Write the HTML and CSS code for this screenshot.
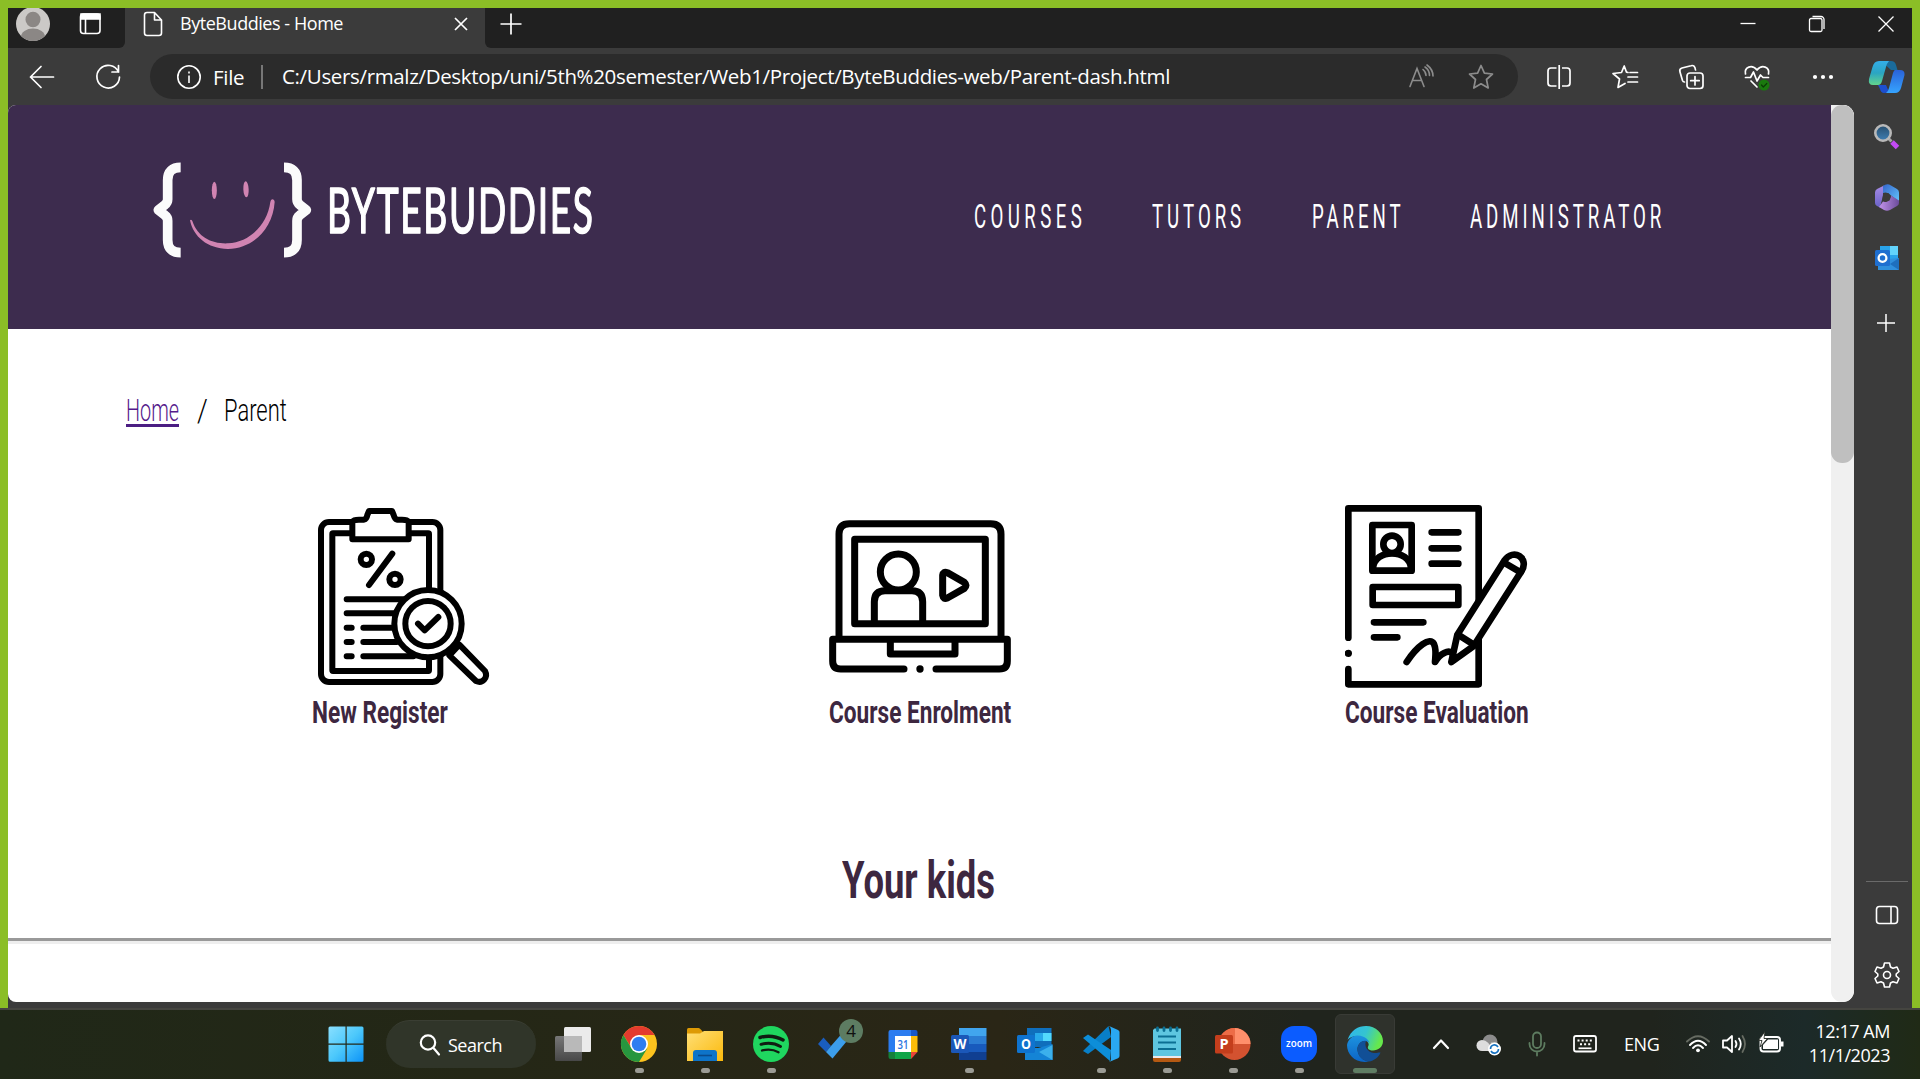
FILE: index.html
```html
<!DOCTYPE html>
<html lang="en">
<head>
<meta charset="utf-8">
<title>ByteBuddies - Home</title>
<link rel="stylesheet" href="styles.css">
</head>
<body>
<div class="desktop">
  <div class="window">
    <header class="titlebar">
      <div class="tab-tools">
        <svg class="ico" viewBox="-20 -20 40 40"><defs><clipPath id="face"><circle r="17"/></clipPath></defs><circle r="17" fill="#cbc9c7"/><g clip-path="url(#face)" fill="#8b8785"><ellipse cy="-4.500" rx="7.500" ry="7.800"/><ellipse cy="13" rx="12" ry="8.500"/></g></svg>
        <svg class="ico" viewBox="-20 -20 40 40" fill="none" stroke="#fff" stroke-width="1.600"><rect x="-9.500" y="-10" width="19.500" height="19.500" rx="3"/><path d="M-4.500-5V9.500"/><path d="M-9-10h19v5h-19z" fill="#fff"/></svg>
      </div>
      <div class="tab">
        <svg class="ico" viewBox="-20 -20 40 40" fill="none" stroke="#fff" stroke-width="1.600" stroke-linejoin="round"><path d="M-6-11.500H1.500L8.500-4V9a2.500 2.500 0 0 1-2.500 2.500H-6A2.500 2.500 0 0 1-8.500 9V-9A2.500 2.500 0 0 1-6-11.500zM1.500-11.500v7.500h7"/></svg>
        <span class="tab-title">ByteBuddies - Home</span>
        <svg class="ico" viewBox="-20 -20 40 40" stroke="#fff" stroke-width="1.700"><path d="M-6-6 6 6M6-6-6 6"/></svg>
      </div>
      <div class="tab-rest">
        <svg class="ico" viewBox="-20 -20 40 40" stroke="#fff" stroke-width="1.700"><path d="M-10.500 0h21M0-10.500v21"/></svg>
        <div class="controls">
          <svg class="ico" viewBox="-20 -20 40 40" stroke="#fff" stroke-width="1.300"><path d="M-7.500-.5h15"/></svg>
          <svg class="ico" viewBox="-20 -20 40 40" fill="none" stroke="#fff" stroke-width="1.300"><rect x="-7.500" y="-5.500" width="12.500" height="13" rx="1.500"/><path d="M-4.500-7.500h8.500a3 3 0 0 1 3 3V5"/></svg>
          <svg class="ico" viewBox="-20 -20 40 40" stroke="#fff" stroke-width="1.300"><path d="M-7.500-7.500l15 15M7.500-7.500l-15 15"/></svg>
        </div>
      </div>
    </header>

    <div class="toolbar">
      <svg class="ico back" viewBox="-20 -20 40 40" fill="none" stroke="#fff" stroke-width="1.700" stroke-linecap="round" stroke-linejoin="round"><path d="M11.500 0h-23M-1-10.500-11.500 0-1 10.500"/></svg>
      <svg class="ico reload" viewBox="-20 -20 40 40" fill="none" stroke="#fff" stroke-width="1.700" stroke-linecap="round"><path d="M10.500-5A11.300 11.300 0 1 0 11.500 0M10.500-11.500v6.500H4"/></svg>
      <div class="address">
        <svg class="ico" viewBox="-20 -20 40 40" fill="none" stroke="#fff" stroke-width="1.600"><circle r="11.200"/><path d="M0-1.500V6M0-5.500v2"/></svg>
        <span class="scheme">File</span>
        <span class="url">C:/Users/rmalz/Desktop/uni/5th%20semester/Web1/Project/ByteBuddies-web/Parent-dash.html</span>
        <svg class="ico" viewBox="-20 -20 40 40" fill="none" stroke="#8c8c8c" stroke-width="1.600" stroke-linecap="round"><path d="M-11 9.500-4-8.500 3 9.500M-8.500 3.500H.5M2-7.500q3 2.500 3 6M4-10q4.500 3 4.500 8.500M6-12q6 4.500 6 11"/></svg>
        <svg class="ico star" viewBox="-20 -20 40 40" fill="none" stroke="#8c8c8c" stroke-width="1.700" stroke-linejoin="round"><path d="M0-11.500 3.400-3.800 11.500-3 5.500 2.500 7.200 11 0 6.800-7.200 11-5.500 2.500-11.500-3-3.400-3.800z"/></svg>
      </div>
      <div class="actions">
        <svg class="ico" viewBox="-20 -20 40 40" fill="none" stroke="#fff" stroke-width="1.700"><path d="M-2.500-9H-8a3 3 0 0 0-3 3V6a3 3 0 0 0 3 3h5.500M3-9H8a3 3 0 0 1 3 3V6a3 3 0 0 1-3 3H3M.2-12v24"/></svg>
        <svg class="ico" viewBox="-20 -20 40 40" fill="none" stroke="#fff" stroke-width="1.700" stroke-linejoin="round" stroke-linecap="round"><path d="M3-4.500 1.500-4.800-.8-11-3.500-4.500-12-3.500-5.500 2-7 10.500 0 6.500M5-4.500h7.500M3 0h9.500M3 5h9.500"/></svg>
        <svg class="ico" viewBox="-20 -20 40 40" fill="none" stroke="#fff" stroke-width="1.700" stroke-linecap="round"><rect x="-4" y="-4" width="16" height="15.500" rx="3"/><path d="M4-.5v8.500M-.3 3.700h8.500M4.500-7C4-11 2.500-12 0-11.300L-9-9q-3 1-2 4L-8.500 3.500q.5 1.500 2 1.500"/></svg>
        <svg class="ico" viewBox="-20 -20 40 40" fill="none" stroke="#fff" stroke-width="1.700" stroke-linejoin="round" stroke-linecap="round"><path d="M-11.500-3C-13-10-5-13 0-7 5-13 13-10 11.500-3M-11.500.5h5L-3.500-5 0 4 3.500-2 6 .5h5.500M-6 4 0 10"/><circle cx="7" cy="8" r="5.500" fill="#1a7a0e" stroke="none"/><path d="M4.500 8 6.300 10l3.500-3.500" stroke="#0b3b06" stroke-width="1.200"/></svg>
        <svg class="ico" viewBox="-20 -20 40 40" fill="#fff"><circle cx="-8" r="2.100"/><circle r="2.100"/><circle cx="8" r="2.100"/></svg>
      </div>
      <svg class="ico copilot" viewBox="-20 -20 40 40"><defs><linearGradient id="c1" x1="0" y1="0" x2="0" y2="1"><stop stop-color="#34aee9"/><stop offset=".5" stop-color="#2ba5c2"/><stop offset="1" stop-color="#62d48c"/></linearGradient><linearGradient id="c2" x1="0" y1="0" x2="0" y2="1"><stop stop-color="#2a62d8"/><stop offset="1" stop-color="#36a4ff"/></linearGradient></defs><path d="M-6-16H4q4 0 5 4l1.500 5H4z" fill="#1a6b9b"/><path d="M-8-16H2Q0-14-1-10L-5 4q-1 4-4 4h-5q-5 0-4-6l3.500-12q1.500-6 6.500-6z" fill="url(#c1)"/><path d="M-9 8h8L2 15q-2 1-5 1-3 0-4-4z" fill="#1d4fd0"/><path d="M8-7h5q5 0 4.500 5L14 11q-1.500 5-6 5H-1q2-1 3-5L6-4q1-3 2-3z" fill="url(#c2)"/></svg>
    </div>

    <div class="body">
      <main class="viewport">
        <div class="page">
          <div class="site-header">
            <svg class="logo" viewBox="0 0 1440 420"><g fill="none" stroke="#fbfbfb" stroke-width="29" stroke-linejoin="round"><path d="M152 82C127 82 113 94 113 120V178Q113 188 105 194L85 210 105 226Q113 232 113 242V300C113 326 127 338 152 338"/><path d="M462 82C487 82 501 94 501 120V178Q501 188 509 194L529 210 509 226Q501 232 501 242V300C501 326 487 338 462 338"/></g><g fill="#d184b2"><ellipse cx="253" cy="151" rx="7.500" ry="26"/><ellipse cx="348" cy="148" rx="8" ry="24" transform="rotate(-3 348 148)"/><path d="M180 241Q183 236 187 243C203 292 246 312 294 310 360 306 412 254 421 186 424 174 433 177 434 186 428 270 366 326 294 327 232 326 190 290 180 241z"/></g><g transform="translate(591 280) scale(.592 1)"><text class="logo-text">BYTEBUDDIES</text></g></svg>
            <nav class="nav">
              <a class="slim courses">COURSES</a>
              <a class="slim">TUTORS</a>
              <a class="slim">PARENT</a>
              <a class="slim">ADMINISTRATOR</a>
            </nav>
          </div>
          <div class="crumbs"><a class="home"><span class="slim">Home</span></a><span class="slim sep">/</span><span class="slim here">Parent</span></div>
          <div class="cards">
            <div class="card">
              <svg viewBox="66 45 552 552" fill="none" stroke="#000" stroke-width="18" stroke-linecap="round" stroke-linejoin="round"><rect x="93" y="96" width="358" height="480" rx="24"/><rect x="127" y="130" width="290" height="413" rx="2"/><path d="M187 95q4-6 20-6h15q8-2 10-14l5-12H306l5 12q3 12 10 14h15q16 0 20 6v53H187z" fill="#fff"/><circle cx="229" cy="208" r="17"/><circle cx="315" cy="268" r="17"/><path d="M307 191 237 285M170 328H340M170 370H320M170 413h15M220 413H310M170 456h15M220 456H320M170 499h15M220 499H370" /><path d="M478 496 508 464 585 543C595 562 578 582 558 573z" fill="#fff"/><circle cx="414" cy="401" r="101" fill="#fff"/><circle cx="414" cy="401" r="68"/><path d="M384 401 404 421 445 381"/></svg>
              <h3 class="slim">New Register</h3>
            </div>
            <div class="card">
              <svg viewBox="57 45 552 552" fill="none" stroke="#000" stroke-width="21" stroke-linecap="round" stroke-linejoin="round"><path d="M87 440V132Q87 101 118 101H542Q573 101 573 132V440"/><rect x="134" y="148" width="392" height="253"/><circle cx="265" cy="246" r="54"/><path d="M193 400V335Q193 302 225 302H306Q338 302 338 335V400M398 256Q400 243 412 248L463 277Q473 286 463 295L412 324Q400 329 398 316zM282 537H92Q68 537 68 513V448H592V513Q592 537 568 537H378M241 450V492H435V450"/><circle cx="330" cy="537" r="11" fill="#000" stroke="none"/></svg>
              <h3 class="slim">Course Enrolment</h3>
            </div>
            <div class="card">
              <svg viewBox="45 45 552 552" fill="none" stroke="#000" stroke-width="20" stroke-linecap="round" stroke-linejoin="round"><path d="M55 443V55H446V583H55V537"/><circle cx="55" cy="490" r="11" fill="#000" stroke="none"/><rect x="127" y="105" width="118" height="137"/><circle cx="186" cy="163" r="26"/><path d="M129 235C133 175 239 175 243 235M305 127h80M305 175h80M305 221h80M128 291H385V345H128zM132 397H280M132 442h70M230 516C260 470 300 438 312 462 320 480 316 500 315 516 330 490 356 478 367 490"/><path d="M382 434 523 212C550 172 600 205 574 244L431 468 364 516z" fill="#fff"/><path d="M384 434 430 463M521 217 572 247"/></svg>
              <h3 class="slim">Course Evaluation</h3>
            </div>
          </div>
          <h2 class="kids"><span class="slim">Your kids</span></h2>
          <div class="rule"></div>
        </div>
        <div class="scrollbar"><div class="thumb"></div></div>
      </main>
      <aside class="sidebar">
        <svg class="ico" viewBox="-20 -20 40 40"><defs><linearGradient id="lens" x1="0" y1="0" x2="0" y2="1"><stop stop-color="#274e6e"/><stop offset="1" stop-color="#3f7fb4"/></linearGradient></defs><path d="M5 6 10.500 11.500" stroke="#c44bf5" stroke-width="5"/><path d="M0 1 4.500 5.500" stroke="#a5a5a5" stroke-width="3"/><circle cx="-4" cy="-3" r="7.700" fill="url(#lens)" stroke="#b9b9b9" stroke-width="2.600"/></svg>
        <svg class="ico" viewBox="-20 -20.500 40 40"><defs><linearGradient id="m1" x1="0" y1="0" x2="0" y2="1"><stop stop-color="#a78be6"/><stop offset="1" stop-color="#6a63c8"/></linearGradient><linearGradient id="m2" x1="0" y1="0" x2="1" y2="1"><stop stop-color="#3567cc"/><stop offset="1" stop-color="#62c4fb"/></linearGradient><linearGradient id="m3" x1="0" y1="0" x2="1" y2="0"><stop stop-color="#c193ea"/><stop offset="1" stop-color="#6c4c9c"/></linearGradient></defs><path d="M-3-12-10-8.500Q-12-7.300-12-5V5.500Q-12 7.500-10 8.500L-7 10-4-2V-5z" fill="url(#m1)"/><path d="M-4-11.500Q0-14.500 4-12L10-8.500Q12-7.300 12-5V4L4-2Q1-6-4-4.500z" fill="url(#m2)"/><path d="M12 3V5.500Q12 7.500 10 8.500L3 12.500Q0 14-3 12.500L-8 9.500-4 4Q2 6 4-2z" fill="url(#m3)"/><path d="M-4-3.500 1-4.500 4-1 2.500 3-1.500 4.500-4.500 3z" fill="#3b3b3b"/></svg>
        <svg class="ico" viewBox="-20 -20 40 40"><path d="M-7-12H11V4H-7z" fill="#29a3ea"/><path d="M3-12h8V-3H3z" fill="#62d3fb"/><path d="M-9 2 12 0V12H-9z" fill="#2f8fdd"/><path d="M12 0V12L3 6z" fill="#1e6fbe"/><rect x="-12" y="-8" width="15" height="16" rx="1.500" fill="#1f6fd0"/><circle cx="-4.500" cy="0" r="3.900" fill="none" stroke="#fff" stroke-width="2.300"/></svg>
        <svg class="ico add" viewBox="-20 -20 40 40" stroke="#fff" stroke-width="1.500"><path d="M-9 0H9M0-9V9"/></svg>
        <div class="divider"></div>
        <svg class="ico panel" viewBox="-20 -20 40 40" fill="none" stroke="#fff" stroke-width="1.600"><rect x="-10.500" y="-8.500" width="21" height="17" rx="3"/><path d="M4-8.500v17"/></svg>
        <svg class="ico gear" viewBox="-20 -20 40 40" fill="none" stroke="#fff" stroke-width="1.600" stroke-linejoin="round"><circle r="3.500"/><path d="M-2.500-12H2.500L3.500-8 6-6.800 10-8 12-3.500 9.200-1V1L12 3.500 10 8 6 6.800 3.500 8 2.500 12H-2.500L-3.500 8-6 6.800-10 8-12 3.500-9.200 1V-1L-12-3.500-10-8-6-6.800-3.500-8z"/></svg>
      </aside>
    </div>
  </div>

  <footer class="taskbar">
    <div class="apps">
      <div class="app win"><svg class="ico" viewBox="-20 -20 40 40"><defs><linearGradient id="w" x1="0" y1="0" x2="1" y2="1"><stop stop-color="#8ae0ff"/><stop offset=".5" stop-color="#4cc8fb"/><stop offset="1" stop-color="#0c93f7"/></linearGradient></defs><path d="M-16-17.500H-.5v17h-17v-15.500q0-1.500 1.500-1.500zM.7-17.500H16q1.500 0 1.500 1.500V-.5H.7zM-17.500.8H-.5V17.800H-16q-1.500 0-1.500-1.500zM.7.8H17.500V16.300q0 1.500-1.500 1.500H.7z" fill="url(#w)"/></svg></div>
      <div class="search"><svg class="ico" viewBox="-20 -20 40 40" fill="none" stroke="#fff" stroke-width="2.200" stroke-linecap="round"><circle cx="-2" cy="-2.500" r="7.200"/><path d="M3.500 3 9 9.500"/></svg><span>Search</span></div>
      <div class="app"><svg class="ico" viewBox="-20 -20 40 40"><defs><linearGradient id="t" x1="0" y1="0" x2="0" y2="1"><stop stop-color="#777"/><stop offset="1" stop-color="#484848"/></linearGradient></defs><rect x="-18" y="-8" width="27" height="25" rx="1.500" fill="url(#t)"/><rect x="-9" y="-17" width="27" height="25" rx="1.500" fill="#ebebeb"/><path d="M-9-8H9V8H-9z" fill="#b9b9b9"/></svg></div>
      <div class="app run"><svg class="ico" viewBox="-20 -20 40 40"><circle r="18" fill="#fcc31e"/><path d="M-15.600-9A18 18 0 0 1 15.600-9H0Q-5-8-8 3z" fill="#e33b2e"/><path d="M-15.600-9A18 18 0 0 0 0 18L8.500 4Q2 11-7 5z" fill="#27963f"/><circle r="9" fill="#fff"/><circle r="7.300" fill="#2f7df0"/></svg></div>
      <div class="app run"><svg class="ico" viewBox="-20 -20 40 40"><defs><linearGradient id="f" x1="0" y1="0" x2="1" y2="1"><stop stop-color="#ffdf77"/><stop offset="1" stop-color="#fbb90b"/></linearGradient></defs><path d="M-18-14.500q0-1.500 1.500-1.500h10q1.500 0 4 3.500V-8H-18z" fill="#dd9a05"/><path d="M-18-10.500h13l4-2.500H18V17H-18z" fill="url(#f)"/><path d="M-12 17V9q0-3 3-3H9q3 0 3 3v8z" fill="#0e74c9"/><path d="M-7 11.500H7" stroke="#0a4b8c" stroke-width="1.600"/></svg></div>
      <div class="app run"><svg class="ico" viewBox="-20 -20 40 40" fill="none" stroke="#101c12" stroke-linecap="round"><circle r="18" fill="#1fd65f" stroke="none"/><path d="M-11-6.500Q1-10 12-4" stroke-width="3.500"/><path d="M-10 .3Q1-2.500 9.500 2.500" stroke-width="2.900"/><path d="M-9 6.500Q0 4 7.500 8.200" stroke-width="2.300"/></svg></div>
      <div class="app todo"><svg class="ico" viewBox="-20 -20 40 40"><path d="M-19 0-13.500-6.500-6 2-11 8z" fill="#1a5dbd"/><path d="M-11 8-6 2 8-14 14-8-4.500 14.500z" fill="#3c9eeb"/></svg><b class="badge">4</b></div>
      <div class="app"><svg class="ico" viewBox="-20 -20 40 40"><path d="M-12.500-14H8V-8H-8V8h-6.500V-12q0-2 2-2z" fill="#2b7cf0"/><path d="M8-14h4.500q2 0 2 2v4H8z" fill="#1556c8"/><path d="M8-8h6.500V8H8z" fill="#fbbc09"/><path d="M-14.500 8H-8v7h-4.500q-2 0-2-2z" fill="#14803a"/><path d="M-8 8H8v7H-8z" fill="#0fa547"/><path d="M8 8h6.500L8 15z" fill="#e8433a"/><path d="M-8-8H8V8H-8z" fill="#fff"/><text x="0" y="4.800" text-anchor="middle" font-size="13" font-weight="600" fill="#2b74e0" textLength="11" lengthAdjust="spacingAndGlyphs">31</text></svg></div>
      <div class="app run"><svg class="ico" viewBox="-20 -20 40 40"><path d="M-10-16H17.500V-8H-10z" fill="#41a5ee"/><path d="M-10-8H17.500V0H-10z" fill="#2b7cd3"/><path d="M-10 0H17.500V8H-10z" fill="#185abd"/><path d="M-10 8H17.500V16H-10z" fill="#103f91"/><rect x="-18" y="-9" width="18" height="18" rx="1.500" fill="#1b57b8"/><text x="-9" y="5.200" text-anchor="middle" font-size="14.500" font-weight="700" fill="#fff" textLength="13" lengthAdjust="spacingAndGlyphs">W</text></svg></div>
      <div class="app"><svg class="ico" viewBox="-20 -20 40 40"><path d="M-8-16H16.500V3H-8z" fill="#0f6ebc"/><path d="M0-11H8V-3H0z" fill="#28a8ea"/><path d="M8-11h8.500V-3H8z" fill="#52d9fd"/><path d="M-10 3 3 4 17.500 0V16H-10z" fill="#1484d6"/><path d="M17.500 1V16L4 8z" fill="#3bb0ec"/><rect x="-18" y="-9" width="18" height="18" rx="1.500" fill="#0f73cf"/><text x="-9" y="5.200" text-anchor="middle" font-size="14.500" font-weight="700" fill="#fff" textLength="10" lengthAdjust="spacingAndGlyphs">O</text></svg></div>
      <div class="app run"><svg class="ico" viewBox="-20 -20 40 40"><path d="M7.500-18-15.500 4.500-18 7-13 10 10-7z" fill="#087fc8"/><path d="M-13-9.500-18-6 9 17 10 6z" fill="#0d8ed9"/><path d="M8-18 17-14Q18.500-13 18.500-12V12q0 1.500-1.500 2.300L8 18q2-1 2-3V-14q0-2.500-2-4z" fill="#2aa8f2"/></svg></div>
      <div class="app run"><svg class="ico" viewBox="-20 -20 40 40"><path d="M-14 10H14V16q0 2-2 2H-12q-2 0-2-2z" fill="#b55912"/><path d="M-14 10H14V14H-14z" fill="#ece8ea"/><path d="M-12.500-15.500H14V12H-14V-14z" fill="#5ec6e0"/><path d="M-9-7.500H9M-9-1.500H9M-9 5H9" stroke="#0b6f93" stroke-width="1.900"/><path d="M-9.500-16v2.500M-3-16v2.500M3.500-16v2.500M10-16v2.500" stroke="#0b6f93" stroke-width="2.800" stroke-linecap="round"/></svg></div>
      <div class="app run"><svg class="ico" viewBox="-20 -20 40 40"><circle cx="1.500" r="16" fill="#d35230"/><path d="M1.500 0V-16A16 16 0 0 1 17.500 0z" fill="#ff8f6b"/><path d="M1.500 0H-14.500A16 16 0 0 1 1.500-16z" fill="#ed6c47"/><rect x="-18" y="-9" width="18" height="18.500" rx="1.500" fill="#c43e1c"/><text x="-9" y="5.200" text-anchor="middle" font-size="14.500" font-weight="700" fill="#fff">P</text></svg></div>
      <div class="app run"><svg class="ico" viewBox="-20 -20 40 40"><rect x="-18" y="-18" width="36" height="36" rx="13" fill="#0b5cff"/><text x="0" y="3.300" text-anchor="middle" font-size="11.500" font-weight="600" fill="#fff" textLength="26" lengthAdjust="spacingAndGlyphs">zoom</text></svg></div>
      <div class="app run active"><svg class="ico" viewBox="-20 -20 40 40"><defs><linearGradient id="e1" x1="0" y1="0" x2="1" y2=".3"><stop stop-color="#2eb5ee"/><stop offset=".55" stop-color="#35c4d0"/><stop offset="1" stop-color="#66e84c"/></linearGradient><linearGradient id="e2" x1="0" y1="0" x2="0" y2="1"><stop stop-color="#1d93df"/><stop offset="1" stop-color="#0c63c4"/></linearGradient></defs><path d="M-17.500-4C-14-14-7-18 1-18 11-18 18-10.500 18-3 18 3 13 6.500 8 6.500 3 6.500 2 4 3.500 1.500 5-1-1-8-8-8-12-8-16-6-17.500-4z" fill="url(#e1)"/><path d="M-18 1C-17-5-12-9-7-8.500 0-8 4-4 4.500-1-1-6-8-1-7.500 6-7 12-2 17 4 17.500-9 20-18 11-18 1z" fill="url(#e2)"/><path d="M-7.500 6C-8 0-3-4 1-3-1 2 2 8 9 9 12 9.300 14 8 15.500 8.500 14 13 9 17 4 17.500-3 17-7 12-7.500 6z" fill="#114f96"/></svg></div>
    </div>
    <div class="tray">
      <svg class="ico chevron" viewBox="-20 -20 40 40" fill="none" stroke="#fff" stroke-width="2.200" stroke-linecap="round" stroke-linejoin="round"><path d="M-7 4 0-3.500 7 4"/></svg>
      <svg class="ico cloud" viewBox="-20 -20 40 40"><circle cx="1" cy="-2" r="7.500" fill="#8c8c8c"/><path d="M2-2h5a5 5 0 0 1 0 9H0z" fill="#aaa"/><path d="M-7 7a5.500 5.500 0 0 1 0-11Q0-4 3 7z" fill="#ddd"/><circle cx="5.500" cy="5" r="6.500" fill="#fff"/><path d="M1.500 5a4 4 0 0 1 7.500-2M9.500 5a4 4 0 0 1-7.500 2" fill="none" stroke="#1470c0" stroke-width="1.600"/></svg>
      <svg class="ico mic" viewBox="-20 -20 40 40" fill="none" stroke="#5d7c60" stroke-width="1.800" stroke-linecap="round"><rect x="-4" y="-11.500" width="8" height="15.500" rx="4"/><path d="M-7.500-1V0a7.500 7.500 0 0 0 15 0V-1M0 7.500V11.500"/></svg>
      <svg class="ico kbd" viewBox="-20 -20 40 40" fill="none" stroke="#fff"><rect x="-11" y="-8" width="22" height="15.500" rx="2" stroke-width="1.800"/><path d="M-7.500-3.500H8M-5 .3H6" stroke-width="2" stroke-dasharray="2 2.100"/><path d="M-6.500 4.300H6.500" stroke-width="1.700"/></svg>
      <span class="lang">ENG</span>
      <svg class="ico wifi" viewBox="-20 -20 40 40" fill="none" stroke="#fff" stroke-width="1.900" stroke-linecap="round"><path d="M-11-2.500Q0-13 11-2.500" stroke="#666b62"/><path d="M-8 1Q0-7.500 8 1M-5 4Q0-1.500 5 4"/><circle cy="6.300" r="1.900" fill="#fff" stroke="none"/></svg>
      <svg class="ico vol" viewBox="-20 -20 40 40" fill="none" stroke="#fff" stroke-width="1.800" stroke-linejoin="round" stroke-linecap="round"><path d="M-11-3.500h4L-2-8V8L-7 3.500h-4zM1.500-3Q3.500 0 1.500 3M5-5.500Q8.500 0 5 5.500"/><path d="M8.500-8Q13.500 0 8.500 8" stroke="#666b62"/></svg>
      <svg class="ico batt" viewBox="-20 -20 40 40"><rect x="-10.500" y="-7" width="19.500" height="14.500" rx="3" fill="none" stroke="#fff" stroke-width="1.900"/><path d="M-8 5V1L-3-4.500H7V5zM9.500-2.500h3v5h-3z" fill="#fff"/><path d="M-6-12.500-12.500-3.500h3.500l-2 6.500 7.500-8.500h-3.500z" fill="#fff" stroke="#20241d" stroke-width=".8"/></svg>
      <div class="clock"><span>12:17 AM</span><span>11/1/2023</span></div>
    </div>
  </footer>
</div>
</body>
</html>
```
FILE: styles.css
```css
* { box-sizing: border-box; }
body { margin: 0; font-family: "Open Sans", "Noto Sans", sans-serif; color: #fff; }
svg { display: block; flex: none; }
.ico { width: 40px; height: 40px; }
.desktop { width: 1920px; height: 1079px; display: grid; grid-template-rows: 1008px 71px; overflow: hidden; background: #8bbe26; }
.window { margin: 8px 8px 0; display: grid; grid-template-rows: 40px 57px 903px; background: #3b3b3b; overflow: hidden; }

/* tab strip */
.titlebar { display: grid; grid-template-columns: 117px 360px 1fr; height: 40px; }
.tab-tools { display: flex; background: #202020; border-radius: 0 0 6px 0; padding-left: 5px; gap: 17px; height: 40px; align-items: flex-start; overflow: hidden; }
.tab-tools .ico { margin-top: -4px; }
.tab { display: flex; align-items: center; height: 32px; padding-left: 8px; }
.tab-title { width: 254px; margin-left: 7px; font-size: 18px; letter-spacing: -.45px; white-space: nowrap; line-height: 31px; margin-top: -1px; }
.tab-title + .ico { margin-left: 7px; }
.tab-rest { display: flex; justify-content: space-between; background: #202020; border-radius: 0 0 0 6px; padding: 0 6px 0 6px; height: 40px; }
.tab-rest .ico { margin-top: -4px; }
.controls { display: flex; gap: 29px; }

/* address row */
.toolbar { display: flex; align-items: center; height: 57px; }
.back { margin-left: 14px; }
.reload { margin-left: 26px; }
.address { display: flex; align-items: center; width: 1368px; height: 45px; margin-left: 22px; padding-left: 19px; border-radius: 23px; background: #2b2b2b; font-size: 20.500px; line-height: 45px; white-space: nowrap; }
.scheme { width: 50px; margin-left: 4px; line-height: 24px; letter-spacing: -.3px; border-right: 2px solid #777; }
.url { width: 1119px; margin-left: 19px; letter-spacing: -.34px; }
.star { margin-left: 20px; }
.actions { display: flex; gap: 26px; margin-left: 21px; }
.copilot { margin-left: 24px; }

/* web page */
.body { display: grid; grid-template-columns: 1846px 58px; }
.viewport { display: grid; grid-template-columns: 1823px 23px; height: 897px; border-radius: 8px 11px 11px 8px; background: #fff; overflow: hidden; }
.page { color: #3d2740; font-family: Roboto, "Liberation Sans", sans-serif; overflow: hidden; }
.scrollbar { background: #f0f0f0; border-radius: 0 0 11px 11px; }
.thumb { height: 358px; border-radius: 11px; background: #bfbfbf; }
.slim { display: block; white-space: nowrap; transform-origin: 0 50%; }
.site-header { display: flex; height: 224px; background: #3d2c4e; color: #fff; }
.logo { width: 480px; height: 140px; margin: 35px 0 0 122px; overflow: visible; }
.logo-text { font: 400 188px Lato, sans-serif; fill: #fff; stroke: #fff; stroke-width: 5px; stroke-linejoin: round; letter-spacing: 8.500px; }
.nav { display: grid; grid-template-columns: 178px 160px 158px 190px; margin-left: 364px; padding-top: 91px; font-size: 34px; line-height: 40px; }
.nav .slim { transform: scaleX(.55); letter-spacing: 7.100px; }
.nav .courses { letter-spacing: 8px; }
.crumbs { display: flex; margin: 61px 0 0 118px; height: 40px; font-size: 32px; line-height: 40px; color: #000; }
.home { width: 53px; height: 37px; border-bottom: 3px solid #4b1e83; color: #551a8b; }
.crumbs .slim { transform: scaleX(.62); font-weight: 300; }
.crumbs .sep { width: 11px; margin-left: 18px; transform: scaleX(.85); }
.crumbs .here { margin-left: 16px; transform: scaleX(.685); }
.cards { display: grid; grid-template-columns: 516.500px 516.500px 200px; margin: 75px 0 0 304px; }
.card svg { width: 184px; height: 184px; }
.card h3 { margin: 3px 0 0; font-size: 32px; line-height: 40px; transform: scaleX(.707); }
.kids { margin: 119px 0 0 834px; font-size: 52px; line-height: 60px; }
.kids .slim { transform: scaleX(.7); }
.rule { margin-top: 27px; height: 6px; border-top: 3px solid #999; border-bottom: 3px solid #eee; }

/* edge sidebar */
.sidebar { height: 903px; display: flex; flex-direction: column; padding: 11px 0 0 13px; gap: 21px; }
.add { margin: 4px 0 0 -1px; }
.divider { width: 42px; height: 1px; margin: 517px 0 0 -1px; background: #6a6a6a; }
.panel { margin-top: -8px; }
.gear { margin-top: -1px; }

/* taskbar */
.taskbar { display: flex; justify-content: space-between; border-top: 2px solid #454540; background: linear-gradient(90deg, #202818 0, #242716 25%, #2a2616 52%, #20241d 68%, #20241d 86%, #1c2a29 94%, #202a16 100%); }
.apps { display: flex; margin-left: 320px; }
.app { position: relative; width: 60px; height: 60px; margin: 4px 3px 0; display: flex; justify-content: center; padding-top: 10px; border-radius: 6px; }
.win { margin: 4px 0 0 -4px; }
.search { display: flex; align-items: center; width: 150px; height: 48px; margin: 10px 4px 0 10px; padding-left: 24px; border-radius: 24px; background: #303529; border-top: 1px solid #3a3e33; font-size: 18px; letter-spacing: -.5px; }
.search span { margin-left: -2px; }
.run::after { content: ""; position: absolute; left: 50%; bottom: 1px; width: 9px; height: 5px; margin-left: -4px; border-radius: 3px; background: #9b9b94; }
.active { background: #2f322c; border: 1px solid #393b36; padding-top: 9px; }
.active::after { width: 24px; margin-left: -12px; bottom: 0; background: #5f7d63; }
.badge { position: absolute; left: 32px; top: 5px; width: 24px; height: 24px; border-radius: 50%; background: #5d7c62; color: #101010; font-size: 17px; font-weight: 400; line-height: 24px; text-align: center; }
.tray { display: flex; align-items: center; height: 67px; margin-right: 30px; font-size: 18px; letter-spacing: -.45px; }
.cloud, .mic, .kbd { margin-left: 8px; }
.lang { width: 54px; margin-left: 19px; }
.vol { margin-left: -4px; }
.batt { margin-left: -3px; }
.clock { display: flex; flex-direction: column; align-items: flex-end; width: 99px; line-height: 24px; margin-top: -2px; }
```
